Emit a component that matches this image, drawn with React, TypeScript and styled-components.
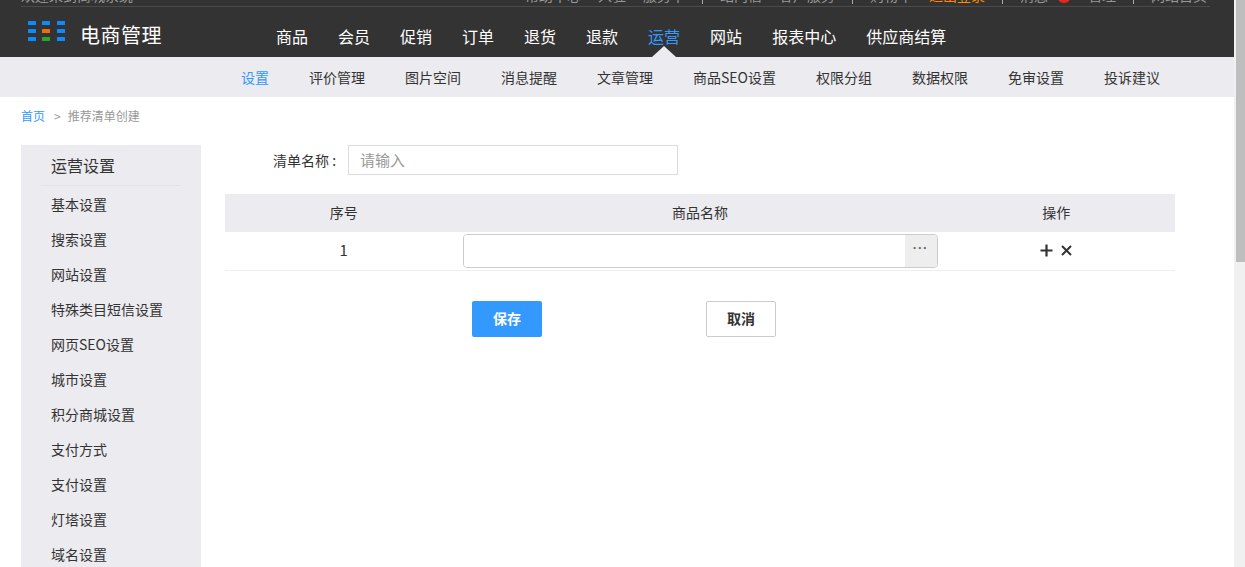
import React from 'react';
import styled, { createGlobalStyle } from 'styled-components';

const mainNav = ['商品', '会员', '促销', '订单', '退货', '退款', '运营', '网站', '报表中心', '供应商结算'];
const subNav = ['设置', '评价管理', '图片空间', '消息提醒', '文章管理', '商品SEO设置', '权限分组', '数据权限', '免审设置', '投诉建议'];
const sideItems = ['基本设置', '搜索设置', '网站设置', '特殊类目短信设置', '网页SEO设置', '城市设置', '积分商城设置', '支付方式', '支付设置', '灯塔设置', '域名设置', '物流设置'];

const logoCells = [
  { x: 0, y: 0, fill: '#0a8cff' }, { x: 14, y: 0, fill: '#0a8cff' }, { x: 29, y: 0, fill: '#0a8cff' },
  { x: 0, y: 8, fill: '#0a8cff' }, { x: 14, y: 8, fill: '#f06a0f' }, { x: 29, y: 8, fill: '#0a8cff' },
  { x: 0, y: 16, fill: '#0a8cff' }, { x: 14, y: 16, fill: '#2ba52e' }, { x: 29, y: 16, fill: '#0a8cff' },
];

export default function App() {
  return (
    <Shell>
      <GlobalStyle />
      <Page>
        <Header>
          <TopStrip>
            <Welcome>欢迎来到商城系统</Welcome>
            <TopLinks>
              <TopLink>帮助中心</TopLink>
              <TopLink>入驻</TopLink>
              <TopLink>服务中</TopLink>
              <TopSep />
              <TopLink>站内信</TopLink>
              <TopLink>客户服务</TopLink>
              <TopSep />
              <TopLink>购物车</TopLink>
              <TopLink $accent>退出登录</TopLink>
              <TopSep />
              <TopLink>消息</TopLink>
              <RedDot />
              <TopLink>管理</TopLink>
              <TopSep />
              <TopLink>网站首页</TopLink>
            </TopLinks>
          </TopStrip>
          <BrandRow>
            <Logo width="37" height="20" viewBox="0 0 37 20">
              {logoCells.map((c, i) => (
                <rect key={i} x={c.x} y={c.y} width="8" height="4" rx="0.5" fill={c.fill} />
              ))}
            </Logo>
            <BrandName>电商管理</BrandName>
            <MainNav>
              {mainNav.map(name => (
                <MainItem key={name} $active={name === '运营'}>{name}</MainItem>
              ))}
            </MainNav>
          </BrandRow>
        </Header>
        <SubNav>
          {subNav.map(name => (
            <SubItem key={name} $active={name === '设置'}>{name}</SubItem>
          ))}
        </SubNav>
        <Breadcrumb>
          <CrumbLink>首页</CrumbLink>
          <CrumbArrow>&gt;</CrumbArrow>
          <span>推荐清单创建</span>
        </Breadcrumb>
        <Body>
          <Sidebar>
            <SideTitle>运营设置</SideTitle>
            {sideItems.map(name => (
              <SideItem key={name}>{name}</SideItem>
            ))}
          </Sidebar>
          <Content>
            <FormRow>
              <FormLabel>清单名称 :</FormLabel>
              <NameInput placeholder="请输入" />
            </FormRow>
            <Table>
              <colgroup>
                <Col $width={25} />
                <Col $width={50} />
                <Col $width={25} />
              </colgroup>
              <thead>
                <tr>
                  <Th>序号</Th>
                  <Th>商品名称</Th>
                  <Th>操作</Th>
                </tr>
              </thead>
              <tbody>
                <tr>
                  <SeqCell>1</SeqCell>
                  <Td>
                    <PickerGroup>
                      <PickerInput />
                      <PickerAddon>...</PickerAddon>
                    </PickerGroup>
                  </Td>
                  <Td>
                    <Actions>
                      <svg width="13" height="13" viewBox="0 0 13 13">
                        <path d="M6.5 0.5v12M0.5 6.5h12" stroke="#333" strokeWidth="2.2" fill="none" />
                      </svg>
                      <svg width="11" height="11" viewBox="0 0 11 11">
                        <path d="M1 1l9 9M10 1l-9 9" stroke="#333" strokeWidth="2" fill="none" />
                      </svg>
                    </Actions>
                  </Td>
                </tr>
              </tbody>
            </Table>
            <ButtonRow>
              <PrimaryButton>保存</PrimaryButton>
              <PlainButton>取消</PlainButton>
            </ButtonRow>
          </Content>
        </Body>
      </Page>
      <Scrollbar>
        <ScrollThumb />
      </Scrollbar>
    </Shell>
  );
}

const GlobalStyle = createGlobalStyle`
  html, body {
    margin: 0;
    height: 100%;
    overflow: hidden;
    background: #fff;
  }
  body {
    font-family: "Noto Sans CJK SC", "Liberation Sans", sans-serif;
    font-size: 14px;
    color: #333;
  }
`;

const Shell = styled.div`
  display: flex;
  height: 567px;
  overflow: hidden;
`;

const Page = styled.div`
  flex: 1;
  min-width: 0;
`;

const Scrollbar = styled.div`
  width: 11px;
  height: 567px;
  background: #f0f0f0;
  display: flex;
  justify-content: flex-end;
`;

const ScrollThumb = styled.div`
  width: 9px;
  height: 262px;
  background: #bebebe;
`;

const Header = styled.div`
  height: 57px;
  background: #333;
`;

const TopStrip = styled.div`
  height: 6px;
  margin: 0 24px 0 21px;
  border-bottom: 1px solid #4a4a4a;
  display: flex;
  justify-content: space-between;
  align-items: flex-end;
  overflow: hidden;
  color: #999;
`;

const Welcome = styled.span`
  flex: none;
  line-height: 18px;
  height: 18px;
  font-size: 14px;
  margin-bottom: 2px;
`;

const TopLinks = styled.div`
  display: flex;
  align-items: flex-end;
  gap: 17px;
  padding-right: 3px;
`;

const TopLink = styled.span<{ $accent?: boolean }>`
  font-size: 14px;
  line-height: 18px;
  height: 18px;
  margin-bottom: 2px;
  color: ${p => (p.$accent ? '#ff8a00' : '#999')};
`;

const TopSep = styled.span`
  width: 1px;
  height: 4px;
  margin-bottom: 2px;
  background: #aaa;
`;

const RedDot = styled.span`
  width: 14px;
  height: 14px;
  margin: 0 0 3px -8px;
  border-radius: 50%;
  background: #e8261c;
`;

const BrandRow = styled.div`
  height: 50px;
  display: flex;
  align-items: center;
  padding-left: 28px;
`;

const Logo = styled.svg`
  flex: none;
  margin-top: -2px;
`;

const BrandName = styled.div`
  width: 195px;
  margin: 6px 1px 0 15px;
  font-size: 20px;
  letter-spacing: 0.5px;
  line-height: 28px;
  color: #fff;
`;

const MainNav = styled.nav`
  display: flex;
  gap: 30px;
  align-self: stretch;
  align-items: center;
`;

const MainItem = styled.a<{ $active?: boolean }>`
  position: relative;
  font-size: 16px;
  line-height: 24px;
  margin-top: 8px;
  color: ${p => (p.$active ? '#3399ff' : '#fff')};

  ${p =>
    p.$active &&
    `&::after {
      content: '';
      position: absolute;
      left: 50%;
      margin-left: -12px;
      bottom: -9px;
      border-left: 12px solid transparent;
      border-right: 12px solid transparent;
      border-bottom: 11px solid #ecebf0;
    }`}
`;

const SubNav = styled.nav`
  height: 40px;
  background: #ecebf0;
  display: flex;
  align-items: center;
  gap: 40px;
  padding-left: 241px;
`;

const SubItem = styled.a<{ $active?: boolean }>`
  font-size: 14px;
  color: ${p => (p.$active ? '#3399ff' : '#333')};
`;

const Breadcrumb = styled.div`
  box-sizing: border-box;
  height: 48px;
  padding: 0 0 12px 21px;
  display: flex;
  align-items: center;
  font-size: 12px;
  color: #999;
`;

const CrumbLink = styled.a`
  color: #3399ff;
`;

const CrumbArrow = styled.span`
  margin: 0 7px 0 9px;
`;

const Body = styled.div`
  display: flex;
  padding-left: 21px;
`;

const Sidebar = styled.aside`
  flex: none;
  width: 180px;
  padding-bottom: 20px;
  background: #ecebf0;
`;

const SideTitle = styled.div`
  margin: 0 20px;
  padding-left: 10px;
  height: 40px;
  line-height: 41px;
  font-size: 16px;
  border-bottom: 1px solid #e4e4e6;
`;

const SideItem = styled.a`
  display: block;
  padding-left: 30px;
  height: 35px;
  line-height: 36px;
  font-size: 14px;
`;

const Content = styled.div`
  flex: none;
  width: 950px;
  margin-left: 24px;
`;

const FormRow = styled.div`
  display: flex;
  align-items: center;
  height: 30px;
  padding-left: 48px;
`;

const FormLabel = styled.label`
  width: 75px;
  font-size: 14px;
`;

const NameInput = styled.input`
  box-sizing: border-box;
  width: 330px;
  height: 30px;
  padding: 0 11px 2px;
  border: 1px solid #dcdcdc;
  outline: none;
  font-family: inherit;
  font-size: 15px;

  &::placeholder {
    color: #999;
  }
`;

const Table = styled.table`
  width: 100%;
  margin-top: 19px;
  border-collapse: collapse;
  table-layout: fixed;
`;

const Col = styled.col<{ $width: number }>`
  width: ${p => p.$width}%;
`;

const Th = styled.th`
  box-sizing: border-box;
  height: 38px;
  padding: 0 0 2px;
  background: #ecebf0;
  font-weight: 400;
  font-size: 14px;
`;

const Td = styled.td`
  box-sizing: border-box;
  height: 38px;
  padding: 0;
  text-align: center;
  border-bottom: 1px solid #eee;
`;

const SeqCell = styled(Td)`
  padding-bottom: 3px;
  font-size: 15px;
`;

const PickerGroup = styled.div`
  box-sizing: border-box;
  display: flex;
  height: 34px;
  border: 1px solid #ccc;
  border-radius: 4px;
  overflow: hidden;
`;

const PickerInput = styled.input`
  flex: 1;
  min-width: 0;
  border: 0;
  outline: none;
`;

const PickerAddon = styled.span`
  flex: none;
  width: 32px;
  background: #eee;
  font-family: "Liberation Sans", sans-serif;
  font-size: 13px;
  font-weight: 700;
  letter-spacing: 1.6px;
  line-height: 20px;
  color: #666;
`;

const Actions = styled.div`
  display: flex;
  align-items: center;
  justify-content: center;
  gap: 8px;
  margin-bottom: 1px;
`;

const ButtonRow = styled.div`
  display: flex;
  gap: 164px;
  margin-top: 30px;
  padding-left: 247px;
`;

const PrimaryButton = styled.button`
  box-sizing: border-box;
  width: 70px;
  height: 36px;
  padding: 0 0 2px;
  border: 0;
  border-radius: 2px;
  background: #3399ff;
  color: #fff;
  font-family: inherit;
  font-size: 14px;
  font-weight: 700;
`;

const PlainButton = styled(PrimaryButton)`
  border: 1px solid #ccc;
  background: #fff;
  color: #333;
`;
